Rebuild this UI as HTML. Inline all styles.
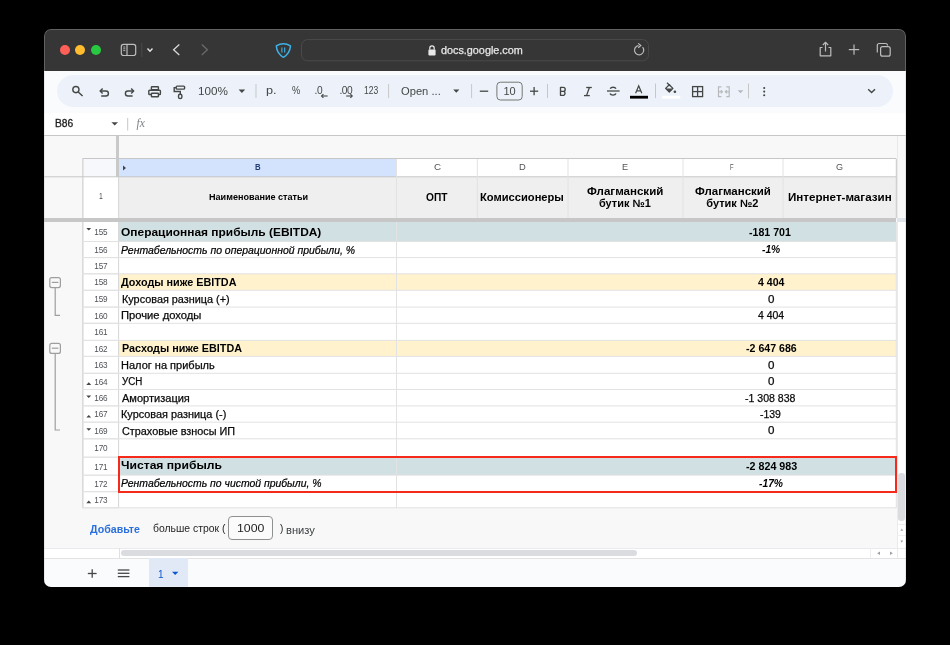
<!DOCTYPE html>
<html><head><meta charset="utf-8"><style>
html,body{margin:0;padding:0;background:#000;width:950px;height:645px;overflow:hidden;}
body{position:relative;font-family:"Liberation Sans", sans-serif;}
#win{position:absolute;left:0;top:0;width:950px;height:645px;will-change:transform;clip-path:inset(29px 44px 58px 44px round 7px);}
</style></head><body><div id="win">
<div style="position:absolute;left:44px;top:29px;width:862px;height:42px;background:#363636;"></div>
<div style="position:absolute;left:44px;top:29px;width:862px;height:558px;border:1px solid rgba(255,255,255,0.22);border-radius:7px;box-sizing:border-box;z-index:5;"></div>
<div style="position:absolute;left:44px;top:71px;width:862px;height:516px;background:#f9fbfd;"></div>
<div style="position:absolute;left:59.599999999999994px;top:45.2px;width:10.0px;height:10.0px;background:#fe5f57;border-radius:50%;"></div>
<div style="position:absolute;left:75.3px;top:45.2px;width:10.0px;height:10.0px;background:#febc2e;border-radius:50%;"></div>
<div style="position:absolute;left:91px;top:45.2px;width:10px;height:10.0px;background:#28c840;border-radius:50%;"></div>
<svg style="position:absolute;left:0;top:0" width="950" height="645">
<rect x="121.3" y="44.3" width="14.4" height="11.2" rx="2.2" fill="none" stroke="#bdbdbd" stroke-width="1.2"/>
<line x1="127" y1="44.3" x2="127" y2="55.5" stroke="#bdbdbd" stroke-width="1.2"/>
<line x1="123.2" y1="47" x2="125.3" y2="47" stroke="#bdbdbd" stroke-width="0.9"/>
<line x1="123.2" y1="48.8" x2="125.3" y2="48.8" stroke="#bdbdbd" stroke-width="0.9"/>
<line x1="123.2" y1="50.6" x2="125.3" y2="50.6" stroke="#bdbdbd" stroke-width="0.9"/>
<line x1="141.8" y1="43" x2="141.8" y2="57" stroke="#4a4a4a" stroke-width="1"/>
<polyline points="147.5,48.6 150,51.2 152.5,48.6" fill="none" stroke="#e6e6e6" stroke-width="1.4"/>
<polyline points="179.3,44.6 173.6,49.8 179.3,55" fill="none" stroke="#d8d8d8" stroke-width="1.3"/>
<polyline points="201.8,44.6 207.4,49.8 201.8,55" fill="none" stroke="#6a6a6a" stroke-width="1.3"/>
<path d="M276.3,45.8 Q283.4,41.8 290.5,45.8 Q290,53.5 283.4,57.3 Q276.8,53.5 276.3,45.8 Z" fill="none" stroke="#3fb2e6" stroke-width="1.5" stroke-linejoin="round"/>
<line x1="281.9" y1="47.6" x2="281.9" y2="52.6" stroke="#3fb2e6" stroke-width="1.1"/>
<line x1="284.7" y1="47.6" x2="284.7" y2="52.6" stroke="#3fb2e6" stroke-width="1.1"/>
<rect x="301.5" y="39.6" width="347" height="21.2" rx="6" fill="none" stroke="#4a4a4a" stroke-width="1"/>
<rect x="428.4" y="49.6" width="7.2" height="5.8" rx="1" fill="#e8e8e8"/>
<path d="M429.8,49.8 V48 A2.2,2.2 0 0 1 434.2,48 V49.8" fill="none" stroke="#e8e8e8" stroke-width="1.2"/>
<path d="M642.6,47.2 A4.6,4.6 0 1 1 638.6,45.6" fill="none" stroke="#bdbdbd" stroke-width="1.2"/>
<polyline points="638.2,43.4 640.8,45.6 638.2,47.8" fill="none" stroke="#bdbdbd" stroke-width="1.2"/>
<path d="M822.5,47.5 H820.2 V55.8 H830.8 V47.5 H828.5" fill="none" stroke="#bdbdbd" stroke-width="1.2" stroke-linejoin="round"/>
<line x1="825.5" y1="42.5" x2="825.5" y2="51.5" stroke="#bdbdbd" stroke-width="1.2"/>
<polyline points="822.8,45 825.5,42.3 828.2,45" fill="none" stroke="#bdbdbd" stroke-width="1.2"/>
<line x1="848.8" y1="49.6" x2="859.2" y2="49.6" stroke="#bdbdbd" stroke-width="1.2"/>
<line x1="854" y1="44.4" x2="854" y2="54.8" stroke="#bdbdbd" stroke-width="1.2"/>
<rect x="880.6" y="46.6" width="9.6" height="9.6" rx="2" fill="none" stroke="#bdbdbd" stroke-width="1.2"/>
<path d="M877.3,52.5 V45.5 A2,2 0 0 1 879.3,43.5 H885.5 A2,2 0 0 1 887.5,45.5" fill="none" stroke="#bdbdbd" stroke-width="1.2"/>
</svg>
<div style="position:absolute;left:440.75px;top:44.4px;font-size:10.8px;line-height:12px;white-space:nowrap;transform-origin:0 0;transform:scaleX(1.0015);color:#e8e8e8;-webkit-text-stroke:0.25px #e8e8e8;">docs.google.com</div>
<div style="position:absolute;left:56.6px;top:75px;width:836.4px;height:31.799999999999997px;background:#edf2fa;border-radius:16px;"></div>
<div style="position:absolute;left:44px;top:113px;width:862px;height:22px;background:#fff;"></div>
<div style="position:absolute;left:44px;top:135px;width:862px;height:1px;background:#c7c7c7;"></div>
<svg style="position:absolute;left:0;top:0" width="950" height="645">
<g fill="none" stroke="#444746" stroke-width="1.4">
<circle cx="75.9" cy="89.6" r="3.1"/>
<line x1="78.2" y1="91.9" x2="82.6" y2="96.1"/>
<path d="M100.6,91 H105.9 A2.5,2.5 0 0 1 105.9,96 H101.2"/>
<polyline points="102.6,88.6 100.2,91 102.6,93.4"/>
<path d="M133.2,91 H127.9 A2.5,2.5 0 0 0 127.9,96 H132.6"/>
<polyline points="131.2,88.6 133.6,91 131.2,93.4"/>
<rect x="151.4" y="86.7" width="7" height="3" rx="0.6"/>
<rect x="148.8" y="90.2" width="11.6" height="4.3" rx="0.8"/>
<rect x="151.4" y="93.2" width="7" height="3.6" rx="0.6" fill="#edf2fa"/>
<rect x="176.2" y="86.1" width="8.4" height="3" rx="0.9"/>
<path d="M176,87.6 H174.2 V91.5 H180.3 V94"/>
<rect x="178.5" y="94.2" width="3.4" height="4.3" rx="1.6"/>
<line x1="256" y1="84" x2="256" y2="98" stroke="#c7c7c7" stroke-width="1"/>
<line x1="388.6" y1="84" x2="388.6" y2="98" stroke="#c7c7c7" stroke-width="1"/>
<line x1="471.6" y1="84" x2="471.6" y2="98" stroke="#c7c7c7" stroke-width="1"/>
<line x1="547.5" y1="84" x2="547.5" y2="98" stroke="#c7c7c7" stroke-width="1"/>
<line x1="655.5" y1="83.5" x2="655.5" y2="98.2" stroke="#c7c7c7" stroke-width="1"/>
<line x1="748.5" y1="83.5" x2="748.5" y2="98.4" stroke="#c7c7c7" stroke-width="1"/>
<line x1="321.6" y1="96" x2="327.6" y2="96" stroke-width="1.1"/>
<polyline points="323.4,94.2 321.6,96 323.4,97.8" stroke-width="1.1"/>
<line x1="346.2" y1="96" x2="352.2" y2="96" stroke-width="1.1"/>
<polyline points="350.4,94.2 352.2,96 350.4,97.8" stroke-width="1.1"/>
<line x1="479.8" y1="91.2" x2="488.2" y2="91.2" stroke-width="1.3"/>
<rect x="496.9" y="82.2" width="25.3" height="17.8" rx="3.5" stroke="#747775" stroke-width="1"/>
<line x1="530" y1="91.2" x2="538.2" y2="91.2" stroke-width="1.3"/>
<line x1="534.1" y1="87.1" x2="534.1" y2="95.3" stroke-width="1.3"/>
<line x1="607" y1="91" x2="619.6" y2="91" stroke-width="1.3"/>
<path d="M616,88.6 A3.1,2 0 0 0 610.2,88.6"/>
<path d="M610,93.6 A3.1,2 0 0 0 616,93.6"/>
<rect x="692.6" y="86.6" width="10" height="10" stroke-width="1.3"/>
<line x1="697.6" y1="86.6" x2="697.6" y2="96.6" stroke-width="1.3"/>
<line x1="692.6" y1="91.6" x2="702.6" y2="91.6" stroke-width="1.3"/>
<polyline points="868.2,89.2 871.6,92.6 875,89.2" stroke-width="1.4"/>
</g>
<g fill="#444746">
<polygon points="238.6,89.6 245.2,89.6 241.9,92.9"/>
<polygon points="453.2,89.6 459.4,89.6 456.3,92.7"/>
<polygon points="111.4,122.2 118,122.2 114.7,125.5"/>
<rect x="630" y="95.8" width="18" height="2.8" fill="#000"/>
<rect x="662" y="95.8" width="18.2" height="2.8" fill="#fff"/>
<path d="M665.6,88.4 L669.3,84.8 L672.9,88.4 L669.3,92 Z" fill="none" stroke="#444746" stroke-width="1.3" stroke-linejoin="round"/>
<path d="M665.6,88.5 L672.9,88.5 L669.3,92.1 Z"/>
<line x1="667" y1="82.8" x2="670" y2="85.8" stroke="#444746" stroke-width="1.3"/>
<circle cx="674.9" cy="91.7" r="1.3"/>
<path d="M560.5,87.4 H563.2 A2,2 0 0 1 563.2,91.4 H560.5 Z M560.5,91.4 H563.8 A2.15,2.15 0 0 1 563.8,95.3 H560.5 Z" fill="none" stroke="#444746" stroke-width="1.35" stroke-linejoin="round"/>
<g stroke="#444746" stroke-width="1.3"><line x1="586.2" y1="87.5" x2="591.8" y2="87.5"/><line x1="584" y1="95.6" x2="589.8" y2="95.6"/><line x1="589.4" y1="87.5" x2="586.5" y2="95.6"/></g>
<path d="M635.6,93.3 L638.7,85.8 L641.8,93.3 M636.7,90.9 H640.7" fill="none" stroke="#444746" stroke-width="1.25"/>
<circle cx="764.2" cy="88" r="1.05"/>
<circle cx="764.2" cy="91.6" r="1.05"/>
<circle cx="764.2" cy="95.2" r="1.05"/>
<polygon points="737.6,90.3 743.4,90.3 740.5,93.2" fill="#b6b8bb"/>
</g>
<g fill="none" stroke="#b6b8bb" stroke-width="1.2">
<path d="M721.4,86.9 H718.5 V96.6 H721.4"/>
<path d="M726.3,86.9 H729.2 V96.6 H726.3"/>
<line x1="718.5" y1="91.8" x2="722" y2="91.8"/>
<polyline points="720.8,90.2 722.4,91.8 720.8,93.4"/>
<line x1="729.2" y1="91.8" x2="725.7" y2="91.8"/>
<polyline points="726.9,90.2 725.3,91.8 726.9,93.4"/>
</g>
<g stroke="#c7c7c7" stroke-width="1"><line x1="127.7" y1="118" x2="127.7" y2="130.5"/></g>
</svg>
<div style="position:absolute;left:198.49px;top:85.3px;font-size:11px;line-height:12px;white-space:nowrap;transform-origin:0 0;transform:scaleX(1.0648);color:#444746;">100%</div>
<div style="position:absolute;left:265.69px;top:83.8px;font-size:11px;line-height:12px;white-space:nowrap;transform-origin:0 0;transform:scaleX(1.1550);color:#444746;">р.</div>
<div style="position:absolute;left:291.53px;top:85.2px;font-size:10.2px;line-height:12px;white-space:nowrap;transform-origin:0 0;transform:scaleX(0.9102);color:#444746;">%</div>
<div style="position:absolute;left:314.6px;top:85.2px;font-size:10.2px;line-height:12px;text-align:left;white-space:nowrap;color:#444746;letter-spacing:-0.3px;">.0</div>
<div style="position:absolute;left:339.6px;top:85.2px;font-size:10.2px;line-height:12px;text-align:left;white-space:nowrap;color:#444746;letter-spacing:-0.6px;">.00</div>
<div style="position:absolute;left:364.44px;top:85.2px;font-size:10px;line-height:12px;white-space:nowrap;transform-origin:0 0;transform:scaleX(0.8508);color:#444746;">123</div>
<div style="position:absolute;left:400.77px;top:84.6px;font-size:11px;line-height:12px;white-space:nowrap;transform-origin:0 0;transform:scaleX(1.0160);color:#444746;">Open ...</div>
<div style="position:absolute;left:309.6px;top:85.2px;width:400px;font-size:11px;line-height:12px;text-align:center;white-space:nowrap;color:#444746;">10</div>
<div style="position:absolute;left:54.80px;top:117.6px;font-size:10px;line-height:12px;white-space:nowrap;transform-origin:0 0;transform:scaleX(1.0270);color:#1f1f1f;-webkit-text-stroke:0.3px #1f1f1f;">B86</div>
<div style="position:absolute;left:136.6px;top:117.2px;font-size:11.5px;line-height:12px;text-align:left;white-space:nowrap;color:#7d8187;"><i style='font-family:"Liberation Serif",serif;'>fx</i></div>
<div style="position:absolute;left:44px;top:136px;width:862px;height:422px;background:#f8f8f8;"></div>
<div style="position:absolute;left:897px;top:136px;width:9px;height:422px;background:#fff;"></div>
<div style="position:absolute;left:897px;top:136px;width:9px;height:82px;background:#f8f8f8;"></div>
<div style="position:absolute;left:896.5px;top:136px;width:0.7999999999999545px;height:422px;background:#e8eaed;"></div>
<div style="position:absolute;left:82.5px;top:158px;width:813.8px;height:18.80000000000001px;background:#fff;"></div>
<div style="position:absolute;left:119px;top:158px;width:277.5px;height:18.80000000000001px;background:#d3e3fd;"></div>
<div style="position:absolute;left:82.5px;top:158px;width:34.3px;height:18.80000000000001px;background:#f6f8fb;"></div>
<div style="position:absolute;left:82.5px;top:176.8px;width:36.099999999999994px;height:41.39999999999998px;background:#fff;"></div>
<div style="position:absolute;left:119px;top:176.8px;width:777.3px;height:41.39999999999998px;background:#efefef;"></div>
<div style="position:absolute;left:82.5px;top:221.9px;width:813.8px;height:285.9px;background:#fff;"></div>
<div style="position:absolute;left:119px;top:221.9px;width:777.3px;height:19.599999999999994px;background:#d0e0e3;"></div>
<div style="position:absolute;left:119px;top:273.8px;width:777.3px;height:16.5px;background:#fff2cc;"></div>
<div style="position:absolute;left:119px;top:340.4px;width:777.3px;height:16.0px;background:#fff2cc;"></div>
<div style="position:absolute;left:119px;top:457.2px;width:777.3px;height:18.0px;background:#d0e0e3;"></div>
<svg style="position:absolute;left:0;top:0" width="950" height="645">
<line x1="82.5" y1="158.5" x2="896.3" y2="158.5" stroke="#c7c7c7" stroke-width="1"/>
<line x1="44" y1="176.8" x2="896.3" y2="176.8" stroke="#c7c7c7" stroke-width="1"/>
<line x1="396.5" y1="159" x2="396.5" y2="218" stroke="#e2e2e2" stroke-width="1"/>
<line x1="477.3" y1="159" x2="477.3" y2="218" stroke="#e2e2e2" stroke-width="1"/>
<line x1="568" y1="159" x2="568" y2="218" stroke="#e2e2e2" stroke-width="1"/>
<line x1="683" y1="159" x2="683" y2="218" stroke="#e2e2e2" stroke-width="1"/>
<line x1="783" y1="159" x2="783" y2="218" stroke="#e2e2e2" stroke-width="1"/>
<line x1="896.3" y1="159" x2="896.3" y2="218" stroke="#c7c7c7" stroke-width="1"/>
<line x1="82.9" y1="159" x2="82.9" y2="508" stroke="#c7c7c7" stroke-width="1"/>
<line x1="118.6" y1="176.8" x2="118.6" y2="508" stroke="#d6d6d6" stroke-width="1"/>
<line x1="82.5" y1="241.5" x2="896.3" y2="241.5" stroke="#e2e2e2" stroke-width="1"/>
<line x1="82.5" y1="241.5" x2="118.6" y2="241.5" stroke="#e2e2e2" stroke-width="1"/>
<line x1="82.5" y1="257.6" x2="896.3" y2="257.6" stroke="#e2e2e2" stroke-width="1"/>
<line x1="82.5" y1="257.6" x2="118.6" y2="257.6" stroke="#e2e2e2" stroke-width="1"/>
<line x1="82.5" y1="273.8" x2="896.3" y2="273.8" stroke="#e2e2e2" stroke-width="1"/>
<line x1="82.5" y1="273.8" x2="118.6" y2="273.8" stroke="#e2e2e2" stroke-width="1"/>
<line x1="82.5" y1="290.3" x2="896.3" y2="290.3" stroke="#e2e2e2" stroke-width="1"/>
<line x1="82.5" y1="290.3" x2="118.6" y2="290.3" stroke="#e2e2e2" stroke-width="1"/>
<line x1="82.5" y1="307.1" x2="896.3" y2="307.1" stroke="#e2e2e2" stroke-width="1"/>
<line x1="82.5" y1="307.1" x2="118.6" y2="307.1" stroke="#e2e2e2" stroke-width="1"/>
<line x1="82.5" y1="323.3" x2="896.3" y2="323.3" stroke="#e2e2e2" stroke-width="1"/>
<line x1="82.5" y1="323.3" x2="118.6" y2="323.3" stroke="#e2e2e2" stroke-width="1"/>
<line x1="82.5" y1="340.4" x2="896.3" y2="340.4" stroke="#e2e2e2" stroke-width="1"/>
<line x1="82.5" y1="340.4" x2="118.6" y2="340.4" stroke="#e2e2e2" stroke-width="1"/>
<line x1="82.5" y1="356.4" x2="896.3" y2="356.4" stroke="#e2e2e2" stroke-width="1"/>
<line x1="82.5" y1="356.4" x2="118.6" y2="356.4" stroke="#e2e2e2" stroke-width="1"/>
<line x1="82.5" y1="373.3" x2="896.3" y2="373.3" stroke="#e2e2e2" stroke-width="1"/>
<line x1="82.5" y1="373.3" x2="118.6" y2="373.3" stroke="#e2e2e2" stroke-width="1"/>
<line x1="82.5" y1="389.5" x2="896.3" y2="389.5" stroke="#e2e2e2" stroke-width="1"/>
<line x1="82.5" y1="389.5" x2="118.6" y2="389.5" stroke="#e2e2e2" stroke-width="1"/>
<line x1="82.5" y1="405.9" x2="896.3" y2="405.9" stroke="#e2e2e2" stroke-width="1"/>
<line x1="82.5" y1="405.9" x2="118.6" y2="405.9" stroke="#e2e2e2" stroke-width="1"/>
<line x1="82.5" y1="422.2" x2="896.3" y2="422.2" stroke="#e2e2e2" stroke-width="1"/>
<line x1="82.5" y1="422.2" x2="118.6" y2="422.2" stroke="#e2e2e2" stroke-width="1"/>
<line x1="82.5" y1="438.8" x2="896.3" y2="438.8" stroke="#e2e2e2" stroke-width="1"/>
<line x1="82.5" y1="438.8" x2="118.6" y2="438.8" stroke="#e2e2e2" stroke-width="1"/>
<line x1="82.5" y1="457.2" x2="896.3" y2="457.2" stroke="#e2e2e2" stroke-width="1"/>
<line x1="82.5" y1="457.2" x2="118.6" y2="457.2" stroke="#e2e2e2" stroke-width="1"/>
<line x1="82.5" y1="475.2" x2="896.3" y2="475.2" stroke="#e2e2e2" stroke-width="1"/>
<line x1="82.5" y1="475.2" x2="118.6" y2="475.2" stroke="#e2e2e2" stroke-width="1"/>
<line x1="82.5" y1="491.7" x2="896.3" y2="491.7" stroke="#e2e2e2" stroke-width="1"/>
<line x1="82.5" y1="491.7" x2="118.6" y2="491.7" stroke="#e2e2e2" stroke-width="1"/>
<line x1="82.5" y1="507.8" x2="896.3" y2="507.8" stroke="#e2e2e2" stroke-width="1"/>
<line x1="82.5" y1="507.8" x2="118.6" y2="507.8" stroke="#e2e2e2" stroke-width="1"/>
<line x1="396.5" y1="222" x2="396.5" y2="508" stroke="#e2e2e2" stroke-width="1"/>
<line x1="896.3" y1="222" x2="896.3" y2="508" stroke="#e2e2e2" stroke-width="1"/>
</svg>
<div style="position:absolute;left:116px;top:136px;width:3px;height:40.80000000000001px;background:#c9c9c9;"></div>
<div style="position:absolute;left:44px;top:218.2px;width:852.3px;height:3.700000000000017px;background:#c7c7c7;"></div>
<div style="position:absolute;left:896.5px;top:218.2px;width:9.5px;height:3.700000000000017px;background:#dfe3ea;"></div>
<div style="position:absolute;left:255.35px;top:163.0px;font-size:8.6px;line-height:9px;white-space:nowrap;transform-origin:0 0;transform:scaleX(0.9060);color:#233f78;font-weight:bold;">B</div>
<div style="position:absolute;left:433.80px;top:163.0px;font-size:8.6px;line-height:9px;white-space:nowrap;transform-origin:0 0;transform:scaleX(1.1414);color:#505357;">C</div>
<div style="position:absolute;left:519.38px;top:163.0px;font-size:8.6px;line-height:9px;white-space:nowrap;transform-origin:0 0;transform:scaleX(1.0891);color:#505357;">D</div>
<div style="position:absolute;left:621.55px;top:163.0px;font-size:8.6px;line-height:9px;white-space:nowrap;transform-origin:0 0;transform:scaleX(1.0605);color:#505357;">E</div>
<div style="position:absolute;left:730.38px;top:163.0px;font-size:8.6px;line-height:9px;white-space:nowrap;transform-origin:0 0;transform:scaleX(0.6787);color:#505357;">F</div>
<div style="position:absolute;left:835.99px;top:163.0px;font-size:8.6px;line-height:9px;white-space:nowrap;transform-origin:0 0;transform:scaleX(1.0527);color:#505357;">G</div>
<svg style="position:absolute;left:0;top:0" width="950" height="645"><polygon points="123,165.6 126,168 123,170.4" fill="#444"/></svg>
<div style="position:absolute;left:98.79px;top:192.4px;font-size:8.6px;line-height:9px;white-space:nowrap;transform-origin:0 0;transform:scaleX(0.7990);color:#4f5256;">1</div>
<div style="position:absolute;left:208.58px;top:192.9px;font-size:8.4px;line-height:9px;white-space:nowrap;transform-origin:0 0;transform:scaleX(1.0831);color:#000;font-weight:bold;">Наименование статьи</div>
<div style="position:absolute;left:426.24px;top:191.4px;font-size:11px;line-height:12px;white-space:nowrap;transform-origin:0 0;transform:scaleX(0.9239);color:#000;font-weight:bold;">ОПТ</div>
<div style="position:absolute;left:480.46px;top:191.4px;font-size:11px;line-height:12px;white-space:nowrap;transform-origin:0 0;transform:scaleX(1.0134);color:#000;font-weight:bold;">Комиссионеры</div>
<div style="position:absolute;left:587.06px;top:184.6px;font-size:11px;line-height:12px;white-space:nowrap;transform-origin:0 0;transform:scaleX(1.0500);color:#000;font-weight:bold;">Флагманский</div>
<div style="position:absolute;left:599.23px;top:196.6px;font-size:11px;line-height:12px;white-space:nowrap;transform-origin:0 0;transform:scaleX(0.9947);color:#000;font-weight:bold;">бутик №1</div>
<div style="position:absolute;left:694.68px;top:184.6px;font-size:11px;line-height:12px;white-space:nowrap;transform-origin:0 0;transform:scaleX(1.0437);color:#000;font-weight:bold;">Флагманский</div>
<div style="position:absolute;left:706.29px;top:196.6px;font-size:11px;line-height:12px;white-space:nowrap;transform-origin:0 0;transform:scaleX(1.0000);color:#000;font-weight:bold;">бутик №2</div>
<div style="position:absolute;left:787.69px;top:191.4px;font-size:11px;line-height:12px;white-space:nowrap;transform-origin:0 0;transform:scaleX(1.0548);color:#000;font-weight:bold;">Интернет-магазин</div>
<div style="position:absolute;left:-99.2px;top:228.0px;width:400px;font-size:8.2px;line-height:9px;text-align:center;white-space:nowrap;color:#4f5256;letter-spacing:-0.2px;">155</div>
<div style="position:absolute;left:-99.2px;top:245.85000000000002px;width:400px;font-size:8.2px;line-height:9px;text-align:center;white-space:nowrap;color:#4f5256;letter-spacing:-0.2px;">156</div>
<div style="position:absolute;left:-99.2px;top:262.00000000000006px;width:400px;font-size:8.2px;line-height:9px;text-align:center;white-space:nowrap;color:#4f5256;letter-spacing:-0.2px;">157</div>
<div style="position:absolute;left:-99.2px;top:278.35px;width:400px;font-size:8.2px;line-height:9px;text-align:center;white-space:nowrap;color:#4f5256;letter-spacing:-0.2px;">158</div>
<div style="position:absolute;left:-99.2px;top:295.00000000000006px;width:400px;font-size:8.2px;line-height:9px;text-align:center;white-space:nowrap;color:#4f5256;letter-spacing:-0.2px;">159</div>
<div style="position:absolute;left:-99.2px;top:311.50000000000006px;width:400px;font-size:8.2px;line-height:9px;text-align:center;white-space:nowrap;color:#4f5256;letter-spacing:-0.2px;">160</div>
<div style="position:absolute;left:-99.2px;top:328.15000000000003px;width:400px;font-size:8.2px;line-height:9px;text-align:center;white-space:nowrap;color:#4f5256;letter-spacing:-0.2px;">161</div>
<div style="position:absolute;left:-99.2px;top:344.7px;width:400px;font-size:8.2px;line-height:9px;text-align:center;white-space:nowrap;color:#4f5256;letter-spacing:-0.2px;">162</div>
<div style="position:absolute;left:-99.2px;top:361.15000000000003px;width:400px;font-size:8.2px;line-height:9px;text-align:center;white-space:nowrap;color:#4f5256;letter-spacing:-0.2px;">163</div>
<div style="position:absolute;left:-99.2px;top:377.7px;width:400px;font-size:8.2px;line-height:9px;text-align:center;white-space:nowrap;color:#4f5256;letter-spacing:-0.2px;">164</div>
<div style="position:absolute;left:-99.2px;top:394.0px;width:400px;font-size:8.2px;line-height:9px;text-align:center;white-space:nowrap;color:#4f5256;letter-spacing:-0.2px;">166</div>
<div style="position:absolute;left:-99.2px;top:410.34999999999997px;width:400px;font-size:8.2px;line-height:9px;text-align:center;white-space:nowrap;color:#4f5256;letter-spacing:-0.2px;">167</div>
<div style="position:absolute;left:-99.2px;top:426.8px;width:400px;font-size:8.2px;line-height:9px;text-align:center;white-space:nowrap;color:#4f5256;letter-spacing:-0.2px;">169</div>
<div style="position:absolute;left:-99.2px;top:444.3px;width:400px;font-size:8.2px;line-height:9px;text-align:center;white-space:nowrap;color:#4f5256;letter-spacing:-0.2px;">170</div>
<div style="position:absolute;left:-99.2px;top:462.5px;width:400px;font-size:8.2px;line-height:9px;text-align:center;white-space:nowrap;color:#4f5256;letter-spacing:-0.2px;">171</div>
<div style="position:absolute;left:-99.2px;top:479.75px;width:400px;font-size:8.2px;line-height:9px;text-align:center;white-space:nowrap;color:#4f5256;letter-spacing:-0.2px;">172</div>
<div style="position:absolute;left:-99.2px;top:496.05px;width:400px;font-size:8.2px;line-height:9px;text-align:center;white-space:nowrap;color:#4f5256;letter-spacing:-0.2px;">173</div>
<svg style="position:absolute;left:0;top:0" width="950" height="645"><polygon points="86.3,227.9 91.2,227.9 88.75,230.5" fill="#444"/><polygon points="86.3,384.9 91.2,384.9 88.75,382.3" fill="#444"/><polygon points="86.3,395.5 91.2,395.5 88.75,398.1" fill="#444"/><polygon points="86.3,417.59999999999997 91.2,417.59999999999997 88.75,415.0" fill="#444"/><polygon points="86.3,428.2 91.2,428.2 88.75,430.8" fill="#444"/><polygon points="86.3,503.2 91.2,503.2 88.75,500.6" fill="#444"/></svg>
<svg style="position:absolute;left:0;top:0" width="950" height="645"><g fill="none" stroke="#9e9e9e" stroke-width="1.2">
<rect x="49.8" y="277.6" width="10.6" height="10" rx="2"/>
<line x1="51.8" y1="282.4" x2="58.4" y2="282.4"/>
<polyline points="55.2,287.6 55.2,315.4 60,315.4"/>
<rect x="49.8" y="343.4" width="10.6" height="10" rx="2"/>
<line x1="51.8" y1="348.2" x2="58.4" y2="348.2"/>
<polyline points="55.2,353.4 55.2,430 60,430"/>
</g></svg>
<div style="position:absolute;left:121.18px;top:226.1px;font-size:11px;line-height:12.649999999999999px;white-space:nowrap;transform-origin:0 0;transform:scaleX(1.0849);color:#000;font-weight:bold;font-size:11px;ls0:0.5px;">Операционная прибыль (EBITDA)</div>
<div style="position:absolute;left:121.30px;top:244.55px;font-size:10px;line-height:11.5px;white-space:nowrap;transform-origin:0 0;transform:scaleX(1.0444);color:#000;font-style:italic;ls0:0.25px;-webkit-text-stroke:0.2px #000;">Рентабельность по операционной прибыли, %</div>
<div style="position:absolute;left:121.30px;top:277.05px;font-size:10px;line-height:11.5px;white-space:nowrap;transform-origin:0 0;transform:scaleX(1.0813);color:#000;font-weight:bold;ls0:0.45px;">Доходы ниже EBITDA</div>
<div style="position:absolute;left:121.76px;top:293.7px;font-size:10px;line-height:11.5px;white-space:nowrap;transform-origin:0 0;transform:scaleX(1.0850);color:#000;ls0:0.3px;-webkit-text-stroke:0.25px #1a1a1a;">Курсовая разница (+)</div>
<div style="position:absolute;left:121.48px;top:310.2px;font-size:10px;line-height:11.5px;white-space:nowrap;transform-origin:0 0;transform:scaleX(1.1205);color:#000;ls0:0.3px;-webkit-text-stroke:0.25px #1a1a1a;">Прочие доходы</div>
<div style="position:absolute;left:121.52px;top:343.4px;font-size:10px;line-height:11.5px;white-space:nowrap;transform-origin:0 0;transform:scaleX(1.0789);color:#000;font-weight:bold;ls0:0.45px;">Расходы ниже EBITDA</div>
<div style="position:absolute;left:121.39px;top:359.85px;font-size:10px;line-height:11.5px;white-space:nowrap;transform-origin:0 0;transform:scaleX(1.1013);color:#000;ls0:0.3px;-webkit-text-stroke:0.25px #1a1a1a;">Налог на прибыль</div>
<div style="position:absolute;left:121.83px;top:376.4px;font-size:10px;line-height:11.5px;white-space:nowrap;transform-origin:0 0;transform:scaleX(0.9804);color:#000;ls0:0.3px;-webkit-text-stroke:0.25px #1a1a1a;">УСН</div>
<div style="position:absolute;left:122.13px;top:392.7px;font-size:10px;line-height:11.5px;white-space:nowrap;transform-origin:0 0;transform:scaleX(1.1032);color:#000;ls0:0.3px;-webkit-text-stroke:0.25px #1a1a1a;">Амортизация</div>
<div style="position:absolute;left:121.30px;top:409.05px;font-size:10px;line-height:11.5px;white-space:nowrap;transform-origin:0 0;transform:scaleX(1.0894);color:#000;ls0:0.3px;-webkit-text-stroke:0.25px #1a1a1a;">Курсовая разница (-)</div>
<div style="position:absolute;left:121.61px;top:425.5px;font-size:10px;line-height:11.5px;white-space:nowrap;transform-origin:0 0;transform:scaleX(1.0832);color:#000;ls0:0.3px;-webkit-text-stroke:0.25px #1a1a1a;">Страховые взносы ИП</div>
<div style="position:absolute;left:121.21px;top:459.4px;font-size:11px;line-height:12.649999999999999px;white-space:nowrap;transform-origin:0 0;transform:scaleX(1.1013);color:#000;font-weight:bold;font-size:11px;ls0:0.5px;">Чистая прибыль</div>
<div style="position:absolute;left:121.31px;top:478.45px;font-size:10px;line-height:11.5px;white-space:nowrap;transform-origin:0 0;transform:scaleX(1.0412);color:#000;font-style:italic;ls0:0.25px;-webkit-text-stroke:0.2px #000;">Рентабельность по чистой прибыли, %</div>
<div style="position:absolute;left:749.45px;top:226.6px;font-size:10px;line-height:11px;white-space:nowrap;transform-origin:0 0;transform:scaleX(1.0620);color:#000;font-weight:bold;">-181 701</div>
<div style="position:absolute;left:761.69px;top:244.45px;font-size:10px;line-height:11px;white-space:nowrap;transform-origin:0 0;transform:scaleX(1.0255);color:#000;font-weight:bold;font-style:italic;">-1%</div>
<div style="position:absolute;left:757.57px;top:276.95px;font-size:10px;line-height:11px;white-space:nowrap;transform-origin:0 0;transform:scaleX(1.0526);color:#000;font-weight:bold;">4 404</div>
<div style="position:absolute;left:767.73px;top:293.6px;font-size:10px;line-height:11px;white-space:nowrap;transform-origin:0 0;transform:scaleX(1.1557);color:#000;-webkit-text-stroke:0.25px #1a1a1a;">0</div>
<div style="position:absolute;left:757.89px;top:310.1px;font-size:10px;line-height:11px;white-space:nowrap;transform-origin:0 0;transform:scaleX(1.0457);color:#000;-webkit-text-stroke:0.25px #1a1a1a;">4 404</div>
<div style="position:absolute;left:745.53px;top:343.3px;font-size:10px;line-height:11px;white-space:nowrap;transform-origin:0 0;transform:scaleX(1.0615);color:#000;font-weight:bold;">-2 647 686</div>
<div style="position:absolute;left:767.73px;top:359.75px;font-size:10px;line-height:11px;white-space:nowrap;transform-origin:0 0;transform:scaleX(1.1557);color:#000;-webkit-text-stroke:0.25px #1a1a1a;">0</div>
<div style="position:absolute;left:767.73px;top:376.3px;font-size:10px;line-height:11px;white-space:nowrap;transform-origin:0 0;transform:scaleX(1.1557);color:#000;-webkit-text-stroke:0.25px #1a1a1a;">0</div>
<div style="position:absolute;left:745.21px;top:392.6px;font-size:10px;line-height:11px;white-space:nowrap;transform-origin:0 0;transform:scaleX(1.0557);color:#000;-webkit-text-stroke:0.25px #1a1a1a;">-1 308 838</div>
<div style="position:absolute;left:760.45px;top:408.95px;font-size:10px;line-height:11px;white-space:nowrap;transform-origin:0 0;transform:scaleX(1.0445);color:#000;-webkit-text-stroke:0.25px #1a1a1a;">-139</div>
<div style="position:absolute;left:767.73px;top:425.4px;font-size:10px;line-height:11px;white-space:nowrap;transform-origin:0 0;transform:scaleX(1.1557);color:#000;-webkit-text-stroke:0.25px #1a1a1a;">0</div>
<div style="position:absolute;left:745.56px;top:461.1px;font-size:10px;line-height:11px;white-space:nowrap;transform-origin:0 0;transform:scaleX(1.0706);color:#000;font-weight:bold;">-2 824 983</div>
<div style="position:absolute;left:758.79px;top:478.35px;font-size:10px;line-height:11px;white-space:nowrap;transform-origin:0 0;transform:scaleX(1.0286);color:#000;font-weight:bold;font-style:italic;">-17%</div>
<div style="position:absolute;left:118.2px;top:456.2px;width:779.0px;height:36.80000000000001px;border:2.1px solid #f52a1a;box-sizing:border-box;"></div>
<div style="position:absolute;left:44px;top:71px;width:1px;height:510px;background:rgba(0,0,0,0.09);z-index:4;"></div>
<div style="position:absolute;left:905px;top:71px;width:1px;height:510px;background:rgba(0,0,0,0.09);z-index:4;"></div>
<div style="position:absolute;left:89.72px;top:523.0px;font-size:10.6px;line-height:12px;white-space:nowrap;transform-origin:0 0;transform:scaleX(1.0032);color:#2a6fdd;font-weight:bold;">Добавьте</div>
<div style="position:absolute;left:152.52px;top:522.6px;font-size:10px;line-height:12px;white-space:nowrap;transform-origin:0 0;transform:scaleX(1.0397);color:#1f1f1f;">больше строк (</div>
<div style="position:absolute;left:228.3px;top:516.4px;width:45.19999999999999px;height:24.0px;border:1px solid #8e918f;border-radius:4px;box-sizing:border-box;background:#fbfbfb;"></div>
<div style="position:absolute;left:236.58px;top:522.0px;font-size:11px;line-height:12px;white-space:nowrap;transform-origin:0 0;transform:scaleX(1.1200);color:#1f1f1f;">1000</div>
<div style="position:absolute;left:279.83px;top:522.6px;font-size:10px;line-height:12px;white-space:nowrap;transform-origin:0 0;transform:scaleX(0.9989);color:#1f1f1f;">)</div>
<div style="position:absolute;left:285.71px;top:523.9px;font-size:10.6px;line-height:12px;white-space:nowrap;transform-origin:0 0;transform:scaleX(1.0529);color:#3c4043;">внизу</div>
<div style="position:absolute;left:44px;top:548.2px;width:852.5px;height:9.799999999999955px;background:#fff;"></div>
<div style="position:absolute;left:44px;top:548px;width:862px;height:0.7999999999999545px;background:#e8eaed;"></div>
<div style="position:absolute;left:119.2px;top:548.2px;width:0.7000000000000028px;height:9.799999999999955px;background:#e0e0e0;"></div>
<div style="position:absolute;left:120.8px;top:549.6px;width:516.6px;height:6.7999999999999545px;background:#dadce0;border-radius:3.4px;"></div>
<div style="position:absolute;left:870px;top:548.2px;width:1px;height:9.799999999999955px;background:#eee;"></div>
<svg style="position:absolute;left:0;top:0" width="950" height="645"><g fill="#9aa0a6">
<polygon points="880,551.4 877.2,553.2 880,555"/>
<polygon points="890,551.4 892.8,553.2 890,555"/>
<polygon points="900.4,530.8 903.2,530.8 901.8,528.6"/>
<polygon points="900.4,540.6 903.2,540.6 901.8,542.8"/>
</g></svg>
<div style="position:absolute;left:898.4px;top:472.6px;width:6.5px;height:48.799999999999955px;background:#dadce0;border-radius:3.2px;"></div>
<div style="position:absolute;left:897px;top:523.7px;width:9px;height:0.599999999999909px;background:#eee;"></div>
<div style="position:absolute;left:897px;top:535.3px;width:9px;height:0.6000000000000227px;background:#eee;"></div>
<div style="position:absolute;left:44px;top:558px;width:862px;height:29px;background:#f9fbfd;"></div>
<div style="position:absolute;left:44px;top:557.6px;width:862px;height:0.7999999999999545px;background:#e3e3e3;"></div>
<div style="position:absolute;left:148.8px;top:558.4px;width:38.79999999999998px;height:28.600000000000023px;background:#e1e9f7;"></div>
<svg style="position:absolute;left:0;top:0" width="950" height="645"><g fill="none" stroke="#444746" stroke-width="1.3">
<line x1="87.8" y1="573.5" x2="96.6" y2="573.5"/>
<line x1="92.2" y1="569.2" x2="92.2" y2="577.8"/>
<line x1="117.8" y1="570" x2="129.4" y2="570"/>
<line x1="117.8" y1="573.3" x2="129.4" y2="573.3"/>
<line x1="117.8" y1="576.6" x2="129.4" y2="576.6"/>
</g>
<polygon points="172,571.8 178.4,571.8 175.2,575" fill="#0b57d0"/>
</svg>
<div style="position:absolute;left:158.00px;top:567.6px;font-size:11.4px;line-height:12px;white-space:nowrap;transform-origin:0 0;transform:scaleX(0.8799);color:#0b57d0;">1</div>
</div></body></html>
